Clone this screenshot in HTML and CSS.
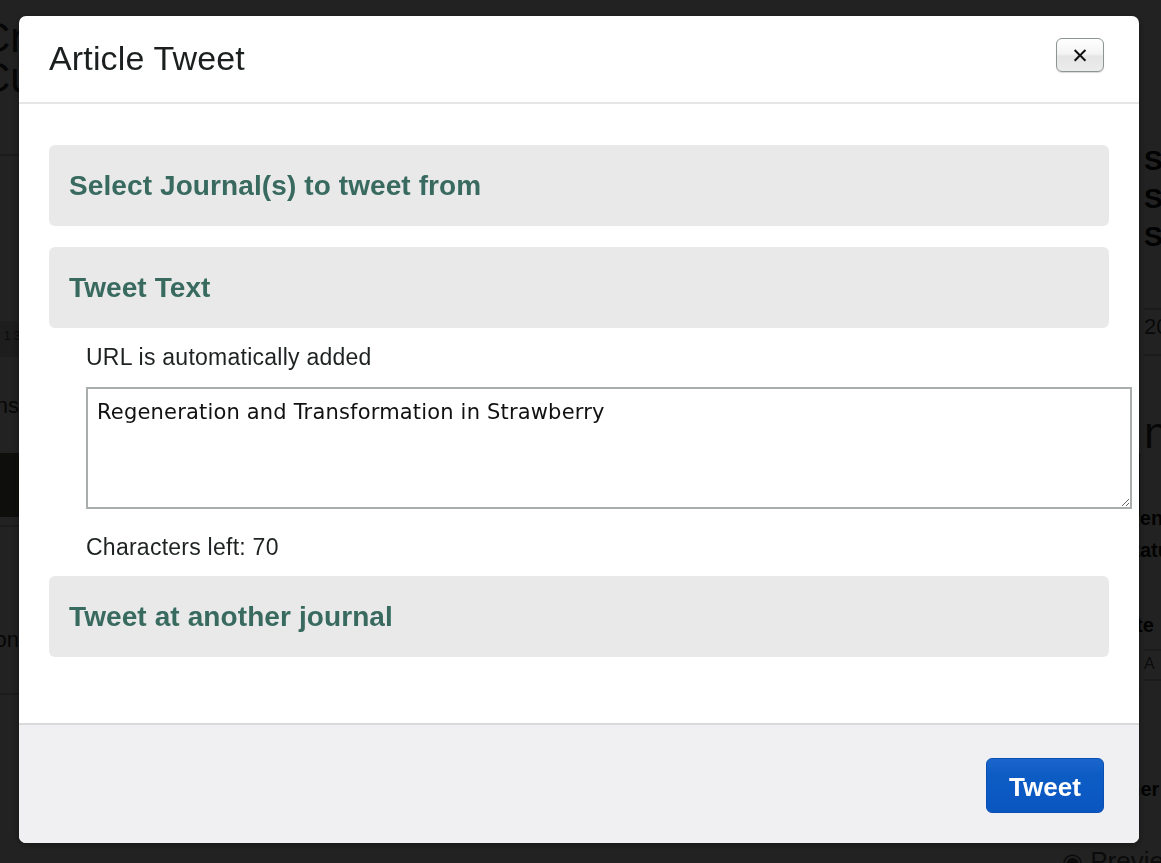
FILE: index.html
```html
<!DOCTYPE html>
<html>
<head>
<meta charset="utf-8">
<title>Article Tweet</title>
<link rel="stylesheet" href="styles.css">
</head>
<body>
<div class="page">
  <div class="main">
    <h1 class="page-title">Cross Crop<br>Cultivars</h1>
    <div class="rule r1"></div>
    <div class="tabs"><span>1 3</span></div>
    <div class="row-text"><span>Transformations</span></div>
    <div class="dark-band"></div>
    <div class="rule r2"></div>
    <div class="row-text low"><span>Regeneration</span></div>
    <div class="rule r3"></div>
  </div>
  <aside class="side">
    <div class="side-stack"><b>Share</b><b>Save</b><b>Subscribe</b></div>
    <div class="side-date">2014</div>
    <div class="side-big">n</div>
    <div class="side-bold first"><span class="cut-open">Open Access</span><span class="cut-status">Status</span></div>
    <div class="side-bold e"><span class="cut-cite">Cite</span></div>
    <div class="side-box">A I</div>
    <div class="side-bold er"><span class="cut-other">Other</span></div>
    <div class="side-prev"><span class="eye">&#9673;</span> Preview</div>
  </aside>
</div>
<div class="overlay"></div>
<div class="modal">
  <div class="modal-header">
    <h2 class="modal-title">Article Tweet</h2>
    <button class="close-btn" type="button">&#x2715;</button>
  </div>
  <div class="modal-body">
    <div class="panel"><h3 class="panel-title">Select Journal(s) to tweet from</h3></div>
    <div class="panel"><h3 class="panel-title">Tweet Text</h3></div>
    <div class="tweet-text">
      <p class="hint">URL is automatically added</p>
      <textarea class="tweet-input">Regeneration and Transformation in Strawberry</textarea>
      <p class="chars">Characters left: 70</p>
    </div>
    <div class="panel"><h3 class="panel-title">Tweet at another journal</h3></div>
  </div>
  <div class="modal-footer">
    <button class="tweet-btn" type="button">Tweet</button>
  </div>
</div>
</body>
</html>
```

FILE: styles.css
```css
* { box-sizing: border-box; }
html, body { margin: 0; padding: 0; }
body {
  width: 1161px;
  height: 863px;
  overflow: hidden;
  background: #ffffff;
  font-family: "Liberation Sans", Arial, sans-serif;
  color: #222;
}

/* background page */
.page {
  display: grid;
  grid-template-columns: 1140px 200px;
  height: 863px;
  overflow: hidden;
}
.main { padding-top: 18px; overflow: hidden; }
.page-title {
  margin: 0 0 0 -20px;
  font-size: 42px;
  line-height: 40px;
  font-weight: normal;
  color: #333;
  white-space: nowrap;
}
.rule { border-top: 2px solid #c8c8c8; }
.r1 { margin-top: 56px; }
.tabs {
  margin-top: 165px;
  height: 36px;
  background: #d6d6d6;
  font-size: 12px;
  padding: 8px 4px;
  color: #555;
}
.row-text {
  width: 19px;
  display: flex;
  justify-content: flex-end;
  white-space: nowrap;
  font-size: 22px;
  padding: 36px 0 0 0;
  height: 96px;
  color: #333;
}
.dark-band { height: 64px; background: #6a6a5a; }
.r2 { margin-top: 8px; }
.row-text.low { padding-top: 100px; height: 166px; }
.side { padding: 0 0 0 4px; color: #111; white-space: nowrap; }
.side-stack { display: flex; flex-direction: column; margin-top: 142px; font-size: 28px; line-height: 38px; }
.side-date { margin-top: 52px; border-top: 2px solid #c8c8c8; border-bottom: 2px solid #c8c8c8; padding: 4px 0 14px; font-size: 22px; color: #444; }
.side-big { font-size: 44px; margin-top: 52px; color: #333; }
.side-bold { font-weight: bold; font-size: 20px; line-height: 32px; margin-top: 32px; display: flex; flex-direction: column; align-items: flex-start; }
.side-bold.first { margin-top: 44px; }
.cut-open { margin-left: -32px; }
.cut-status { margin-left: -24px; }
.cut-cite { margin-left: -28px; }
.cut-other { margin-left: -38px; }
.side-bold.e { margin-top: 43px; }
.side-box { margin-top: 8px; border-top: 2px solid #c8c8c8; border-bottom: 2px solid #c8c8c8; font-size: 16px; letter-spacing: 4px; padding: 4px 0 6px; color: #555; }
.side-bold.er { margin-top: 92px; }
.side-prev { margin-top: 41px; font-size: 26px; margin-left: -82px; color: #555; }
.eye { font-size: 24px; }

.overlay {
  position: fixed;
  inset: 0;
  background: rgba(0, 0, 0, 0.868);
}

/* modal */
.modal {
  position: fixed;
  top: 16px;
  left: 19px;
  width: 1120px;
  height: 827px;
  background: #fff;
  border-radius: 7px;
  display: flex;
  flex-direction: column;
  overflow: hidden;
  box-shadow: 0 2px 8px rgba(0,0,0,0.4);
}
.modal-header {
  height: 88px;
  flex: none;
  display: flex;
  align-items: center;
  justify-content: space-between;
  padding: 0 35px 1px 30px;
  border-bottom: 2px solid #e6e6e6;
}
.modal-title {
  margin: 0;
  font-size: 34px;
  font-weight: normal;
  color: #1c1f1f;
  letter-spacing: 0.15px;
}
.close-btn {
  width: 48px;
  height: 34px;
  margin-top: -7px;
  border: 1px solid #8d9494;
  border-radius: 6px;
  background: linear-gradient(#ffffff 0%, #f4f4f4 45%, #e5e5e5 55%, #ececec 100%);
  box-shadow: 0 1px 1px rgba(0,0,0,0.15);
  font-family: "DejaVu Sans", sans-serif;
  font-size: 21px;
  line-height: 1;
  color: #111;
  padding: 2px 0 0;
}

.modal-body {
  flex: 1;
  padding: 41px 30px 0 30px;
}
.panel {
  height: 81px;
  background: #e9e9e9;
  border-radius: 6px;
  display: flex;
  align-items: center;
  padding: 0 20px 0;
  margin-bottom: 21px;
}
.panel-title {
  margin: 0;
  font-size: 28px;
  font-weight: bold;
  color: #386a5f;
  letter-spacing: 0.1px;
}
.tweet-text {
  margin-top: -21px;
  padding-top: 16px;
  padding-left: 37px;
}
.hint, .chars {
  margin: 0;
  font-size: 23px;
  line-height: 26px;
  color: #1e2222;
  letter-spacing: 0.25px;
}
.tweet-input {
  display: block;
  margin-top: 17px;
  width: 1046px;
  height: 122px;
  border: 2px solid #a9adad;
  border-radius: 0;
  padding: 11px 9px;
  font-family: "DejaVu Sans", sans-serif;
  font-size: 21px;
  line-height: 24px;
  letter-spacing: 0.18px;
  color: #111;
  background: #fff;
  resize: both;
}
.chars { margin-top: 25px; margin-bottom: 16px; }

.modal-footer {
  height: 120px;
  flex: none;
  background: #f0f0f2;
  border-top: 2px solid #d8d9d9;
  display: flex;
  justify-content: flex-end;
  align-items: flex-start;
  padding: 33px 35px 0 0;
}
.tweet-btn {
  width: 118px;
  height: 55px;
  border: 1px solid #0a4fb4;
  border-radius: 6px;
  background: linear-gradient(#1a66cc 0%, #0d5cc4 30%, #0a56c1 100%);
  color: #fff;
  font-family: "Liberation Sans", Arial, sans-serif;
  font-weight: bold;
  font-size: 26px;
  padding: 4px 0 0;
}
```
